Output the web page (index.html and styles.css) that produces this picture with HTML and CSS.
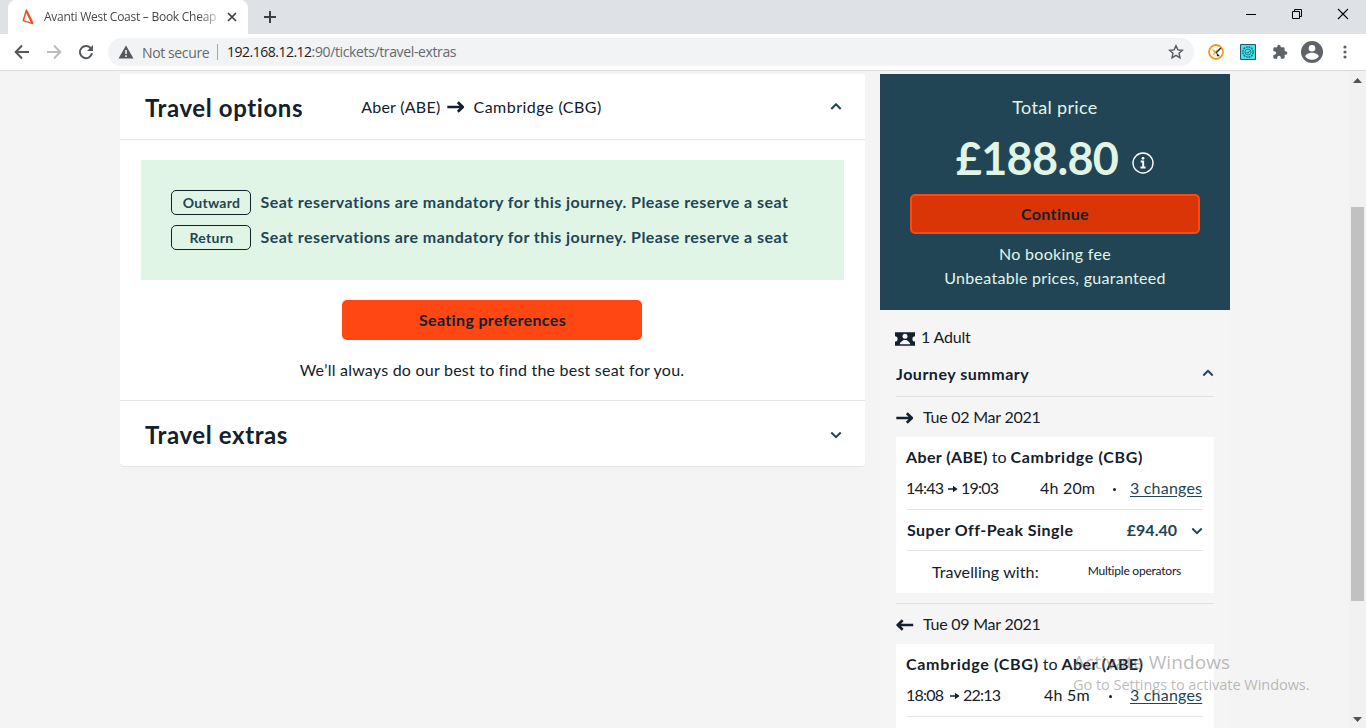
FILE: index.html
```html
<!DOCTYPE html>
<html lang="en">
<head>
<meta charset="utf-8">
<title>Avanti West Coast – Book Cheap</title>
<link rel="stylesheet" href="styles.css">
</head>
<body>
<div class="window">
  <div class="tabstrip">
    <div class="tab">
      <svg class="favicon" width="12" height="16" viewBox="0 0 12 16"><path d="M4.300 1.300L1.300 11.600 10.600 14.600z" fill="none" stroke="#f4511e" stroke-width="1.500" stroke-linejoin="round"/><path d="M4.500 2L10.600 14.600" stroke="#f4511e" stroke-width="2.200"/></svg>
      <span class="tab-title">Avanti West Coast – Book Cheap</span>
      <svg class="tab-close" width="10" height="10" viewBox="0 0 10 10"><path d="M1 1l8 8M9 1l-8 8" stroke="#3c4043" stroke-width="1.700"/></svg>
    </div>
    <svg class="new-tab" width="14" height="14" viewBox="0 0 14 14"><path d="M7 1v12M1 7h12" stroke="#3c4043" stroke-width="2"/></svg>
    <div class="controls">
      <svg width="12" height="12" viewBox="0 0 12 12"><path d="M1 6.500h10" stroke="#000"/></svg>
      <svg width="12" height="12" viewBox="0 0 12 12"><path d="M1.500 3.500h7v7h-7zM3.500 3.500v-2h7v7h-2" fill="none" stroke="#000"/></svg>
      <svg width="12" height="12" viewBox="0 0 12 12"><path d="M1 1l10 10M11 1L1 11" stroke="#000" stroke-width="1.100"/></svg>
    </div>
  </div>
  <div class="toolbar">
    <div class="nav">
      <svg width="16" height="16" viewBox="0 0 16 16"><path d="M15 8H2.500M8 1.500L1.700 8 8 14.500" fill="none" stroke="#54575b" stroke-width="2"/></svg>
      <svg width="16" height="16" viewBox="0 0 16 16"><path d="M1 8h12.500M8 1.500L14.300 8 8 14.500" fill="none" stroke="#babcbe" stroke-width="2"/></svg>
      <svg width="16" height="16" viewBox="0 0 16 16"><path d="M13.300 5A6.100 6.100 0 1 0 14 9.300" fill="none" stroke="#54575b" stroke-width="2"/><path d="M15 1v6H9z" fill="#54575b"/></svg>
    </div>
    <div class="omnibox">
      <svg width="16" height="14" viewBox="0 0 16 14"><path d="M8 .5L15.500 13.500H.5z" fill="#54575b"/><path d="M8 5v4M8 10.300v1.700" stroke="#f1f3f4" stroke-width="1.600"/></svg>
      <span class="secure">Not secure</span>
      <span class="url"><b>192.168.12.12</b>:90/tickets/travel-extras</span>
      <svg class="star" width="16" height="16" viewBox="0 0 16 16"><path d="M8 1.700l1.900 4.200 4.500.4-3.400 3 1 4.500L8 11.400l-4 2.400 1-4.500-3.400-3 4.500-.4z" fill="none" stroke="#54575b" stroke-width="1.400"/></svg>
    </div>
    <div class="extensions">
      <svg width="16" height="16" viewBox="0 0 16 16"><circle cx="8" cy="8" r="7" fill="#fff" stroke="#f59b1c" stroke-width="1.800"/><path d="M3.500 4.800l4 2 5-2.800-4.500 5-4 3 2-3.500z" fill="#f9a826"/><path d="M12.800 4L8 9" stroke="#222" stroke-width="1.200"/><path d="M8.500 8.500l3.500 3.700H9z" fill="#222"/></svg>
      <svg width="16" height="16" viewBox="0 0 16 16"><path d="M.5.5h15v15H.5z" fill="#48e0ec" stroke="#1f5961"/><circle cx="8" cy="8" r="5.200" fill="none" stroke="#176c76" stroke-width="1.300" stroke-dasharray="2 .7"/><circle cx="8" cy="8" r="3" fill="none" stroke="#176c76" stroke-width=".8"/><path d="M6.500 8l1.200 1.200L9.800 7" fill="none" stroke="#176c76"/></svg>
      <svg width="16" height="16" viewBox="0 0 24 24"><path d="M20.500 11H19V7c0-1.100-.9-2-2-2h-4V3.500a2.500 2.500 0 0 0-5 0V5H4c-1.100 0-2 .9-2 2v3.800h1.500a2.700 2.700 0 0 1 0 5.400H2V20c0 1.100.9 2 2 2h3.800v-1.500a2.700 2.700 0 0 1 5.400 0V22H17c1.100 0 2-.9 2-2v-4h1.500a2.500 2.500 0 0 0 0-5z" fill="#5f6368"/></svg>
      <svg class="avatar" width="22" height="22" viewBox="0 0 22 22"><circle cx="11" cy="11" r="11" fill="#5f6368"/><circle cx="11" cy="7.300" r="3.300" fill="#fff"/><path d="M4.300 15.500c0-2.600 4.400-3.700 6.700-3.700s6.700 1.100 6.700 3.700A8 8 0 0 1 11 18.800a8 8 0 0 1-6.700-3.300z" fill="#fff"/></svg>
      <svg class="menu" width="4" height="14" viewBox="0 0 4 14"><g fill="#5f6368"><circle cx="2" cy="2" r="1.600"/><circle cx="2" cy="7" r="1.600"/><circle cx="2" cy="12" r="1.600"/></g></svg>
    </div>
  </div>

  <div class="viewport">
    <div class="page">
      <main class="options">
        <section class="panel-head">
          <h2>Travel options</h2>
          <span class="leg from">Aber (ABE)</span>
          <svg class="leg-arrow" width="18" height="12" viewBox="0 0 18 12"><path d="M.3 6h14M10.800 1.300L15.800 6l-5 4.700" fill="none" stroke="#14202b" stroke-width="2.700" stroke-linejoin="round"/></svg>
          <span class="leg to-station">Cambridge (CBG)</span>
          <svg class="toggle" width="12" height="8" viewBox="0 0 12 8"><path d="M1.300 6L6 1.300 10.700 6" fill="none" stroke="#214555" stroke-width="2"/></svg>
        </section>
        <section class="panel-body">
          <div class="notice">
            <div class="notice-row"><span class="tag">Outward</span><span class="notice-text">Seat reservations are mandatory for this journey. Please reserve a seat</span></div>
            <div class="notice-row"><span class="tag">Return</span><span class="notice-text">Seat reservations are mandatory for this journey. Please reserve a seat</span></div>
          </div>
          <button class="seating">Seating preferences</button>
          <p class="promise">We’ll always do our best to find the best seat for you.</p>
        </section>
        <section class="panel-head extras">
          <h2>Travel extras</h2>
          <svg class="toggle" width="12" height="8" viewBox="0 0 12 8"><path d="M1.300 1.500L6 6.200l4.700-4.700" fill="none" stroke="#214555" stroke-width="2"/></svg>
        </section>
      </main>

      <aside class="basket">
        <div class="total">
          <div class="total-label">Total price</div>
          <div class="amount-row">
            <span class="amount">£188.80</span>
            <svg width="22" height="22" viewBox="0 0 22 22"><circle cx="11" cy="11" r="10" fill="none" stroke="#fff" stroke-width="1.400"/><circle cx="11" cy="6.300" r="1.400" fill="#fff"/><path d="M8.700 9.500h2.500v6M8.500 15.500h5" fill="none" stroke="#fff" stroke-width="1.900"/></svg>
          </div>
          <button class="continue">Continue</button>
          <div class="perk">No booking fee</div>
          <div class="perk">Unbeatable prices, guaranteed</div>
        </div>
        <div class="summary">
          <div class="passengers">
            <svg width="20" height="14" viewBox="0 0 20 14"><path d="M0 .3h20v4a2 2 0 0 0 0 5.200v4.200H0V9.500a2 2 0 0 0 0-5.200z" fill="#14202b"/><circle cx="10" cy="4.300" r="2.500" fill="#f5f5f5"/><path d="M4.700 12.300c.3-2.200 2.500-3.300 3.900-4.300h2.800c1.400 1 3.600 2.100 3.900 4.300z" fill="#f5f5f5"/></svg>
            <span>1 Adult</span>
          </div>
          <div class="summary-head">
            <span>Journey summary</span>
            <svg width="12" height="8" viewBox="0 0 12 8"><path d="M1.300 6.500L6 1.800l4.700 4.700" fill="none" stroke="#214555" stroke-width="2"/></svg>
          </div>
          <div class="date">
            <svg width="18" height="12" viewBox="0 0 18 12"><path d="M.3 6h14M10.800 1.300L15.800 6l-5 4.700" fill="none" stroke="#14202b" stroke-width="2.700" stroke-linejoin="round"/></svg>
            <span>Tue 02 Mar 2021</span>
          </div>
          <div class="trip">
            <div class="route"><b class="abe">Aber (ABE)</b> <span class="to">to</span> <b class="cbg">Cambridge (CBG)</b></div>
            <div class="times">
              <span class="clock">14:43</span>
              <svg width="10" height="8" viewBox="0 0 10 8"><path d="M0 4h7" stroke="#14202b" stroke-width="1.500"/><path d="M5 .8L9.600 4 5 7.200z" fill="#14202b"/></svg>
              <span class="clock">19:03</span>
              <span class="duration">4h 20m</span><i class="dot"></i><a class="changes">3 changes</a>
            </div>
            <div class="fare">
              <span class="fare-name">Super Off-Peak Single</span>
              <span class="fare-price">£94.40</span>
              <svg width="12" height="8" viewBox="0 0 12 8"><path d="M1.300 1.500L6 6.200l4.700-4.700" fill="none" stroke="#214555" stroke-width="2"/></svg>
            </div>
            <div class="operator"><span>Travelling with:</span><small>Multiple operators</small></div>
          </div>
          <div class="date inbound">
            <svg width="18" height="12" viewBox="0 0 18 12"><path d="M17.200 6H3M6.700 1.300L1.700 6l5 4.700" fill="none" stroke="#14202b" stroke-width="2.700" stroke-linejoin="round"/></svg>
            <span>Tue 09 Mar 2021</span>
          </div>
          <div class="trip">
            <div class="route"><b class="cbg">Cambridge (CBG)</b> <span class="to">to</span> <b class="abe">Aber (ABE)</b></div>
            <div class="times short">
              <span class="clock">18:08</span>
              <svg width="10" height="8" viewBox="0 0 10 8"><path d="M0 4h7" stroke="#14202b" stroke-width="1.500"/><path d="M5 .8L9.600 4 5 7.200z" fill="#14202b"/></svg>
              <span class="clock">22:13</span>
              <span class="duration">4h 5m</span><i class="dot"></i><a class="changes">3 changes</a>
            </div>
            <div class="fare"></div>
          </div>
        </div>
      </aside>
    </div>
    <div class="scrollbar">
      <svg width="9" height="5" viewBox="0 0 9 5"><path d="M4.500 0L9 5H0z" fill="#505050"/></svg>
      <div class="thumb"></div>
      <svg width="9" height="5" viewBox="0 0 9 5"><path d="M4.500 5L9 0H0z" fill="#505050"/></svg>
    </div>
  </div>
  <div class="watermark">
    <div class="wm-title">Activate Windows</div>
    <div class="wm-text">Go to Settings to activate Windows.</div>
  </div>
</div>
</body>
</html>
```
FILE: styles.css
```css
* { box-sizing: border-box; }
body { margin: 0; font-family: "Lato", sans-serif; font-size: 16px; color: #14202b; overflow: hidden; }
svg { display: block; flex: none; }
button { font: inherit; color: #14202b; padding: 0; }
.window { width: 1366px; height: 728px; display: flex; flex-direction: column; position: relative; overflow: hidden; }

/* Browser chrome */
.tabstrip { height: 34px; flex: none; background: #dee1e6; display: flex; align-items: center; padding-left: 8px; font-family: "Open Sans", sans-serif; }
.tab { width: 240px; height: 34px; background: #fff; border-radius: 8px 8px 0 0; display: flex; align-items: center; padding: 0 11px 0 14px; }
.favicon { margin-right: 10px; }
.tab-title { width: 173px; font-size: 12px; letter-spacing: -.26px; color: #45484c; white-space: nowrap; overflow: hidden; padding-bottom: 1px; -webkit-mask-image: linear-gradient(to right, #000 155px, rgba(0,0,0,.3) 173px); }
.tab-close { margin-left: 10px; }
.new-tab { margin-left: 15px; }
.controls { margin-left: auto; margin-right: 17px; padding-bottom: 6px; display: flex; gap: 34px; }
.toolbar { height: 37px; flex: none; background: #fff; border-bottom: 1px solid #d9dade; display: flex; align-items: center; padding-left: 14px; }
.nav { display: flex; gap: 16px; width: 94px; }
.omnibox { width: 1086px; height: 28px; border-radius: 14px; background: #f1f3f4; display: flex; align-items: center; padding: 0 10px; font-family: "Open Sans", sans-serif; font-size: 14px; color: #66696d; white-space: nowrap; }
.secure { margin-left: 8px; width: 75px; letter-spacing: -.38px; }
.url { border-left: 1px solid #a5a8ab; line-height: 16px; padding-left: 9px; letter-spacing: -.37px; }
.url b { font-weight: 400; color: #202124; letter-spacing: -.5px; }
.star { margin-left: auto; }
.extensions { display: flex; align-items: center; gap: 16px; margin-left: 14px; }
.avatar { margin-left: -3px; }
.menu { margin-left: 4px; }

/* Page */
.viewport { flex: 1; min-height: 0; display: flex; background: #f4f4f4; }
.page { width: 1349px; flex: none; padding: 3px 0 0 120px; display: flex; align-items: flex-start; overflow: hidden; }
.options { width: 745px; background: #fff; border-bottom: 1px solid #e4e4e4; border-radius: 0 0 4px 4px; }
.panel-head { height: 66px; display: flex; align-items: center; padding: 0 23px 0 25px; border-bottom: 1px solid #e4e4e4; }
.extras { border: 0; height: 65px; padding-top: 3px; }
h2 { margin: 0; font-size: 24px; line-height: 30px; letter-spacing: .6px; padding-top: 2px; }
.extras h2 { padding-top: 0; }
.from { margin-left: 58px; letter-spacing: .26px; }
.leg-arrow { margin: 0 8px 0 7px; }
.to-station { letter-spacing: .48px; }
.toggle { margin-left: auto; }
.panel-body { height: 261px; padding: 20px 22px 0 21px; display: flex; flex-direction: column; align-items: center; border-bottom: 1px solid #e4e4e4; }
.notice { width: 703px; height: 120px; flex: none; background: #e1f5e7; padding: 30px; display: flex; flex-direction: column; gap: 10px; color: #214555; font-weight: 700; letter-spacing: .44px; }
.notice-row { display: flex; align-items: center; height: 25px; gap: 10px; white-space: nowrap; }
.notice-text { padding-bottom: 2px; }
.tag { width: 80px; height: 25px; border: 1px solid #14202b; border-radius: 5px; font-size: 14px; line-height: 23px; letter-spacing: .3px; text-align: center; padding-left: 2px; }
.seating { margin-top: 20px; width: 300px; height: 40px; border: 0; border-radius: 5px; background: #ff4713; font-weight: 700; letter-spacing: .35px; padding: 0 0 2px 1px; }
.promise { margin: 20px 0 0; line-height: 20px; letter-spacing: .23px; white-space: nowrap; }

.basket { width: 350px; margin-left: 15px; background: #f5f5f5; }
.total { height: 236px; background: #214555; color: #e1f5e7; text-align: center; padding: 21px 30px 0; }
.total-label { font-size: 18px; line-height: 24px; letter-spacing: .33px; }
.amount-row { height: 75px; display: flex; justify-content: center; align-items: center; gap: 14px; padding-top: 8px; }
.amount-row svg { margin-top: 4px; }
.amount { font-size: 45px; font-weight: 700; line-height: 50px; letter-spacing: -.7px; margin-top: -6px; }
.continue { display: block; width: 290px; height: 40px; border: 2px solid #ff4713; border-radius: 5px; background: #da3507; font-weight: 700; letter-spacing: .35px; margin-bottom: 8px; padding-bottom: 2px; }
.perk { line-height: 24px; letter-spacing: .29px; }
.summary { padding: 18px 16px 0; }
.passengers { display: flex; align-items: center; gap: 6px; margin-left: -1px; height: 20px; letter-spacing: -.2px; }
.passengers svg { margin-top: 2px; }
.passengers span { padding-bottom: 3px; }
.summary-head { height: 49px; padding-top: 3px; border-bottom: 1px solid #e1e2e3; display: flex; align-items: center; justify-content: space-between; font-weight: 700; letter-spacing: .52px; }
.summary-head svg { margin-bottom: 2px; }
.date { height: 40px; display: flex; align-items: center; gap: 9px; letter-spacing: -.24px; padding-top: 2px; }
.date span { padding-bottom: 3px; }
.inbound { margin-top: 10px; height: 41px; border-top: 1px solid #e1e2e3; }
.trip { background: #fff; padding: 0 11px 0 10px; height: 156px; }
.route { height: 40px; line-height: 39px; white-space: nowrap; }
.abe { letter-spacing: .38px; }
.cbg { letter-spacing: .7px; }
.to { letter-spacing: -.1px; }
.times { height: 33px; margin-left: 1px; border-bottom: 1px solid #e4e4e4; display: grid; grid-template-columns: 41px 14px 78px 73px 17px 1fr; align-items: center; padding-bottom: 12px; white-space: nowrap; }
.times svg { margin-top: 3px; }
.short { grid-template-columns: 43px 14px 80px 65px 21px 1fr; }
.clock { letter-spacing: -.75px; margin-left: -1px; }
.duration { letter-spacing: .2px; }
.dot { width: 3px; height: 3px; border-radius: 50%; background: #14202b; margin-top: 4px; }
.changes { color: #214555; text-decoration: underline; text-underline-offset: 2px; letter-spacing: .2px; }
.fare { height: 41px; margin-left: 1px; border-bottom: 1px solid #e4e4e4; display: flex; align-items: center; font-weight: 700; }
.fare span { padding-bottom: 2px; }
.fare svg { margin-top: 1px; }
.fare-name { letter-spacing: .48px; margin-right: auto; }
.fare-price { color: #214555; margin-right: 14px; }
.operator { height: 42px; padding: 0 22px 1px 26px; display: flex; align-items: center; justify-content: space-between; }
.operator span { letter-spacing: .1px; }
.operator small { font-size: 12px; letter-spacing: -.22px; padding-bottom: 3px; }

.scrollbar { width: 17px; background: #f1f1f1; display: flex; flex-direction: column; align-items: center; padding: 7px 2px 6px; }
.thumb { width: 13px; height: 394px; flex: none; margin: 124px 0 auto; background: #c1c1c1; }

/* Desktop overlay text */
.watermark { position: absolute; left: 1073px; top: 650px; font-family: "Open Sans", sans-serif; color: rgba(120,120,120,.5); white-space: nowrap; }
.wm-title { font-size: 19px; line-height: 24px; letter-spacing: .07px; }
.wm-text { font-size: 14.500px; line-height: 22px; letter-spacing: -.03px; }
```
